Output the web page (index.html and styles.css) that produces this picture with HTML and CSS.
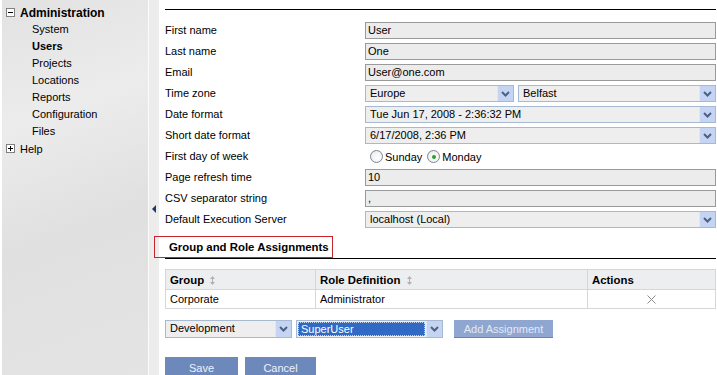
FILE: index.html
```html
<!DOCTYPE html>
<html lang="en">
<head>
<meta charset="UTF-8">
<title>Administration - Users</title>
<link rel="stylesheet" href="styles.css">
</head>
<body>
<div class="layout">
  <div class="sidebar">
    <div class="tree-node">
      <svg class="toggle" width="9" height="9" viewBox="0 0 9 9"><rect x="0.5" y="0.5" width="8" height="8" fill="#fff" stroke="#808080"/><path d="M2 4.5h5" stroke="#000"/></svg>
      <b class="node-title">Administration</b>
    </div>
    <ul class="tree-children">
      <li>System</li>
      <li class="current">Users</li>
      <li>Projects</li>
      <li>Locations</li>
      <li>Reports</li>
      <li>Configuration</li>
      <li>Files</li>
    </ul>
    <div class="tree-node">
      <svg class="toggle" width="9" height="9" viewBox="0 0 9 9"><rect x="0.5" y="0.5" width="8" height="8" fill="#fff" stroke="#808080"/><path d="M2 4.5h5M4.5 2v5" stroke="#000"/></svg>
      <span>Help</span>
    </div>
  </div>

  <div class="splitter"><span class="collapse-arrow"></span></div>

  <div class="main">
    <h3 class="section-title">General Data</h3>

    <div class="form-grid">
      <label>First name</label>
      <div class="field">User</div>

      <label>Last name</label>
      <div class="field">One</div>

      <label>Email</label>
      <div class="field">User@one.com</div>

      <label>Time zone</label>
      <div class="pair">
        <div class="select region"><span class="value">Europe</span><span class="arrow"><svg width="9" height="6" viewBox="0 0 9 6"><path d="M1 1l3.5 3.5L8 1" fill="none" stroke="#4d6185" stroke-width="2"/></svg></span></div>
        <div class="select grow"><span class="value">Belfast</span><span class="arrow"><svg width="9" height="6" viewBox="0 0 9 6"><path d="M1 1l3.5 3.5L8 1" fill="none" stroke="#4d6185" stroke-width="2"/></svg></span></div>
      </div>

      <label>Date format</label>
      <div class="select"><span class="value">Tue Jun 17, 2008 - 2:36:32 PM</span><span class="arrow"><svg width="9" height="6" viewBox="0 0 9 6"><path d="M1 1l3.5 3.5L8 1" fill="none" stroke="#4d6185" stroke-width="2"/></svg></span></div>

      <label>Short date format</label>
      <div class="select"><span class="value">6/17/2008, 2:36 PM</span><span class="arrow"><svg width="9" height="6" viewBox="0 0 9 6"><path d="M1 1l3.5 3.5L8 1" fill="none" stroke="#4d6185" stroke-width="2"/></svg></span></div>

      <label>First day of week</label>
      <div class="radios">
        <span class="radio"></span><span>Sunday</span>
        <span class="radio checked"></span><span>Monday</span>
      </div>

      <label>Page refresh time</label>
      <div class="field">10</div>

      <label>CSV separator string</label>
      <div class="field">,</div>

      <label>Default Execution Server</label>
      <div class="select"><span class="value">localhost (Local)</span><span class="arrow"><svg width="9" height="6" viewBox="0 0 9 6"><path d="M1 1l3.5 3.5L8 1" fill="none" stroke="#4d6185" stroke-width="2"/></svg></span></div>
    </div>

    <h3 class="section-title assign-title"><span class="marked">Group and Role Assignments</span></h3>

    <table class="grid">
      <tr>
        <th class="col-group">Group <svg class="sort" width="5" height="9" viewBox="0 0 5 9"><path d="M2.5 0L0 3h5zM2.5 9L0 6h5zM2 3h1v3H2z" fill="#b0b0b0"/></svg></th>
        <th class="col-role">Role Definition <svg class="sort" width="5" height="9" viewBox="0 0 5 9"><path d="M2.5 0L0 3h5zM2.5 9L0 6h5zM2 3h1v3H2z" fill="#b0b0b0"/></svg></th>
        <th>Actions</th>
      </tr>
      <tr>
        <td>Corporate</td>
        <td>Administrator</td>
        <td class="action"><svg width="9" height="9" viewBox="0 0 9 9"><path d="M0.5 0.5l8 8M8.5 0.5l-8 8" stroke="#8a8a8a" stroke-width="1"/></svg></td>
      </tr>
    </table>

    <div class="assign-row">
      <div class="select group-select"><span class="value">Development</span><span class="arrow"><svg width="9" height="6" viewBox="0 0 9 6"><path d="M1 1l3.5 3.5L8 1" fill="none" stroke="#4d6185" stroke-width="2"/></svg></span></div>
      <div class="select role-select"><span class="value selected">SuperUser</span><span class="arrow"><svg width="9" height="6" viewBox="0 0 9 6"><path d="M1 1l3.5 3.5L8 1" fill="none" stroke="#4d6185" stroke-width="2"/></svg></span></div>
      <button class="btn disabled">Add Assignment</button>
    </div>

    <div class="form-buttons">
      <button class="btn save">Save</button>
      <button class="btn cancel">Cancel</button>
    </div>
  </div>
</div>
</body>
</html>
```

FILE: styles.css
```css
html, body {
  margin: 0;
  height: 100%;
  overflow: hidden;
}
body {
  font-family: Tahoma, "Liberation Sans", Arial, sans-serif;
  font-size: 11px;
  color: #000;
  background: #fff;
}
.layout {
  display: flex;
  height: 100vh;
}

/* navigation tree */
.sidebar {
  width: 146px;
  border-left: 2px solid #fff;
  background: linear-gradient(160deg, #e2e2e2 0%, #ececec 30%, #e0e0e0 60%, #e4e4e4 100%);
  padding-top: 4px;
  box-sizing: content-box;
}
.tree-node {
  display: flex;
  align-items: center;
  height: 17px;
  padding-left: 4px;
}
.toggle {
  margin-right: 5px;
}
.node-title {
  font-size: 12px;
}
.tree-children {
  list-style: none;
  margin: 0;
  padding: 0 0 0 30px;
}
.tree-children li {
  height: 17px;
  line-height: 17px;
}
.tree-children .current {
  font-weight: bold;
}

.splitter {
  width: 11px;
  border-left: 1px solid #fbfbfb;
  background: #ececec;
  padding-top: 205px;
  box-sizing: border-box;
}
.collapse-arrow {
  display: block;
  width: 0;
  height: 0;
  margin-left: 3px;
  border-top: 4px solid transparent;
  border-bottom: 4px solid transparent;
  border-right: 4px solid #1d3a5c;
}

/* main area */
.main {
  flex: 1;
  padding: 0 1px 0 6px;
}
.section-title {
  margin: -14px 0 0;
  padding: 0 0 3px 5px;
  font-size: 11.4px;
  line-height: 20px;
  border-bottom: 1px solid #000;
  white-space: nowrap;
}

.form-grid {
  display: grid;
  grid-template-columns: 200px 1fr;
  grid-auto-rows: 17px;
  row-gap: 4px;
  align-items: center;
  margin-top: 12px;
}
.form-grid label {
  line-height: 17px;
}
.field {
  height: 17px;
  box-sizing: border-box;
  border: 1px solid #9a9a9a;
  background: #ececec;
  padding-left: 2px;
  line-height: 15px;
  white-space: nowrap;
}

.select {
  display: flex;
  height: 17px;
  box-sizing: border-box;
  border: 1px solid #a5b9d0;
  background: #eeeeee;
}
.select .value {
  flex: 1;
  padding-left: 4px;
  line-height: 15px;
  white-space: nowrap;
  overflow: hidden;
}
.select .arrow {
  width: 15px;
  margin: 0;
  background: #c5d4f2;
  border-left: 1px solid #dfe7f8;
  display: flex;
  align-items: center;
  justify-content: center;
}
.pair {
  display: flex;
  gap: 4px;
}
.pair .region {
  width: 149px;
}
.pair .grow {
  flex: 1;
}

.radios {
  display: flex;
  align-items: center;
  gap: 2px;
  padding-left: 5px;
}
.radio {
  width: 11px;
  height: 11px;
  border: 1px solid #7d8591;
  border-radius: 50%;
  background: radial-gradient(circle at 60% 60%, #fff 0%, #f1f1f1 60%, #d8dce2 100%);
  display: inline-flex;
  align-items: center;
  justify-content: center;
}
.radio.checked {
  margin-left: 3px;
}
.radio.checked::after {
  content: "";
  width: 4px;
  height: 4px;
  border-radius: 50%;
  background: #2aa02a;
}

.assign-title {
  margin-top: 8px;
  padding: 0;
  display: flex;
  line-height: 20px;
}
.marked {
  display: inline-block;
  height: 22px;
  margin-left: -11px;
  padding: 0 3px 0 14px;
  box-sizing: border-box;
  border: 1px solid #c8242b;
  line-height: 20px;
  white-space: nowrap;
}

/* assignments table */
.grid {
  width: 100%;
  margin-top: 10px;
  border-collapse: collapse;
  border: 1px solid #d4d6d9;
}
.grid th, .grid td {
  border: 1px solid #d4d6d9;
  height: 19px;
  padding: 0 0 0 4px;
  text-align: left;
  box-sizing: border-box;
}
.grid th {
  background: #eceef0;
  font-size: 11.4px;
  height: 20px;
}
.col-group {
  width: 150px;
}
.col-role {
  width: 272px;
}
.sort {
  margin-left: 3px;
  vertical-align: -1px;
}
.grid .action {
  text-align: center;
  padding: 0;
}
.action svg {
  vertical-align: -1px;
}

.assign-row {
  display: flex;
  align-items: center;
  gap: 4px;
  margin-top: 11px;
  height: 18px;
}
.assign-row .select {
  height: 18px;
}
.group-select {
  width: 127px;
}
.role-select {
  width: 147px;
}
.select .selected {
  flex: 1;
  margin: 1px 1px;
  padding-left: 3px;
  line-height: 14px;
  background: #316ac5;
  color: #fff;
  outline: 1px dotted #c9d6ee;
  outline-offset: -1px;
}

.btn {
  font-family: inherit;
  font-size: 11px;
  border: none;
  height: 18px;
  padding: 0;
  cursor: pointer;
}
.btn.disabled {
  margin-left: 7px;
  width: 99px;
  background: #8fa6d1;
  color: #e2e9f6;
  border-bottom: 1px solid #6c84ad;
}
.form-buttons {
  display: flex;
  gap: 7px;
  margin-top: 19px;
}
.btn.save, .btn.cancel {
  height: 20px;
  padding-top: 2px;
  background: #6d89bc;
  color: #eef2fa;
}
.btn.save {
  width: 73px;
}
.btn.cancel {
  width: 71px;
}
```
